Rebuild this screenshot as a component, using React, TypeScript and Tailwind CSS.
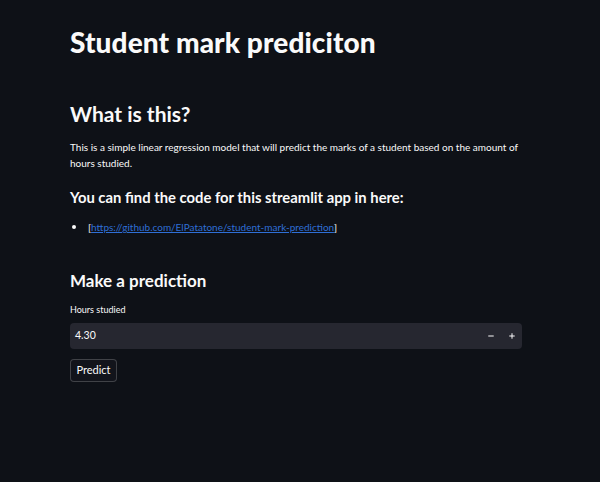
import { Minus, Plus } from "lucide-react";

const App = () => (
  <div className="min-h-[482px] w-full bg-[#0e1117] text-[#fafafa]" style={{ fontFamily: "Lato, 'Liberation Sans', sans-serif" }}>
    <div className="w-[452px] ml-[70px] pt-[26px]">
      <h1 className="text-[28px] leading-[32px] font-black tracking-[0.1px]">Student mark prediciton</h1>

      <h2 className="mt-[42px] text-[21px] leading-[28px] font-bold">What is this?</h2>
      <p className="mt-[11px] text-[10px] leading-[16px]">
        This is a simple linear regression model that will predict the marks of a student based on the amount of hours studied.
      </p>

      <h3 className="mt-[16px] text-[14.8px] leading-[20px] font-bold">You can find the code for this streamlit app in here:</h3>
      <ul className="mt-[12px] text-[10px] leading-[16px]">
        <li className="flex items-center">
          <span className="w-[4px] h-[4px] rounded-full bg-[#fafafa] ml-[2px] mr-[12px]" />
          <span>
            [<a href="#" className="text-[#2f6fd6] underline">https://github.com/ElPatatone/student-mark-prediction</a>]
          </span>
        </li>
      </ul>

      <h3 className="mt-[34px] text-[17px] leading-[24px] font-bold">Make a prediction</h3>

      <div className="mt-[11px] text-[9px] leading-[12px]">Hours studied</div>
      <div className="mt-[7px] h-[26px] rounded-[4px] bg-[#262730] flex items-center pl-[5px] pr-[6px]">
        <span className="flex-1 text-[10.5px]">4.30</span>
        <Minus className="w-[8px] h-[8px] mr-[13px]" strokeWidth={3} />
        <Plus className="w-[8px] h-[8px]" strokeWidth={3} />
      </div>

      <button className="mt-[10px] h-[23px] w-[47px] rounded-[4px] border border-[#fafafa]/20 bg-[#12141b] text-[11px] text-[#fafafa]">
        Predict
      </button>
    </div>
  </div>
);

export default App;
